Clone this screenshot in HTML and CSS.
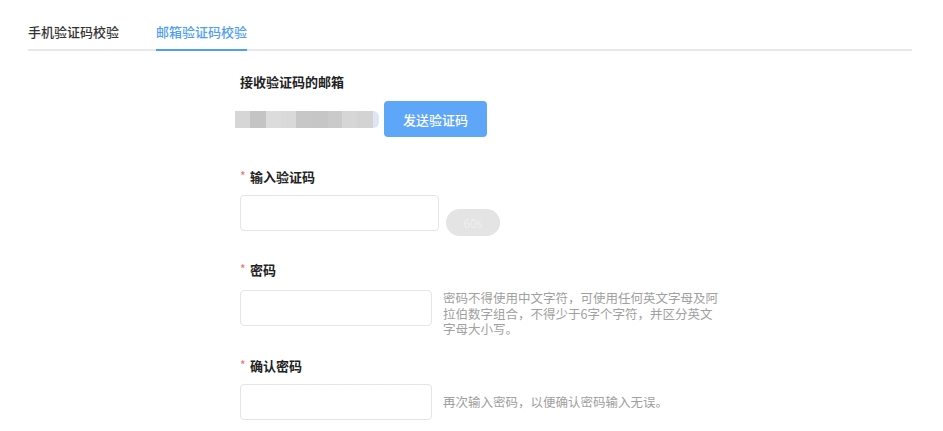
FILE: index.html
```html
<!DOCTYPE html>
<html lang="zh-CN">
<head>
<meta charset="utf-8">
<title>邮箱验证码校验</title>
<link rel="stylesheet" href="styles.css">
</head>
<body>
<div class="tabs">
  <div class="tab">手机验证码校验</div>
  <div class="tab active">邮箱验证码校验</div>
</div>
<div class="form">
  <div class="label">接收验证码的邮箱</div>
  <div class="row row-email">
    <div class="email-blur">
      <span class="b b1"></span><span class="b b2"></span><span class="b b3"></span><span class="b b4"></span><span class="b b5"></span><span class="b b6"></span><span class="b b7"></span><span class="b b8"></span><span class="b b9"></span><span class="b b10"></span>
    </div>
    <button class="btn-send">发送验证码</button>
  </div>

  <div class="label label-req gap-1"><span class="star">*</span>输入验证码</div>
  <div class="row row-code">
    <div class="input input-code"></div>
    <div class="pill">60s</div>
  </div>

  <div class="label label-req gap-2"><span class="star">*</span>密码</div>
  <div class="row row-pass">
    <div class="input"></div>
    <div class="hint hint-multi">密码不得使用中文字符，可使用任何英文字母及阿拉伯数字组合，不得少于6字个字符，并区分英文字母大小写。</div>
  </div>

  <div class="label label-req gap-3"><span class="star">*</span>确认密码</div>
  <div class="row row-confirm">
    <div class="input"></div>
    <div class="hint">再次输入密码，以便确认密码输入无误。</div>
  </div>
</div>
</body>
</html>
```
FILE: styles.css
```css
* { box-sizing: border-box; }
html, body {
  margin: 0;
  padding: 0;
  background: #ffffff;
  font-family: "Noto Sans CJK SC", "Noto Sans", sans-serif;
}
.tabs {
  display: flex;
  gap: 37px;
  margin-left: 28px;
  width: 884px;
  border-bottom: 2px solid #e6e8ef;
}
.tab {
  font-size: 13px;
  line-height: 20px;
  font-weight: 500;
  padding-top: 22px;
  padding-bottom: 7px;
  color: #333333;
  margin-bottom: -2px;
  border-bottom: 2px solid transparent;
}
.tab.active {
  color: #4f9ef6;
  border-bottom-color: #4f9ef6;
}
.form {
  margin-left: 240px;
  padding-top: 21px;
}
.label {
  font-size: 13px;
  line-height: 20px;
  font-weight: 700;
  color: #222222;
  display: flex;
  align-items: center;
}
.star {
  color: #f26b6b;
  font-size: 12px;
  font-weight: 400;
  width: 10px;
  margin-top: -2px;
}
.row { display: flex; }
.row-email {
  margin-top: 9px;
  margin-left: -5px;
  align-items: center;
  gap: 5px;
}
.email-blur {
  display: flex;
  height: 17px;
  filter: blur(0.6px);
}
.b { display: block; height: 17px; width: 15px; }
.b1 { background: #d6d6d6; }
.b2 { background: #c4c4c4; width: 16px; }
.b3 { background: #dcdcdc; }
.b4 { background: #d9d9d9; }
.b5 { background: #c7c7c7; width: 16px; }
.b6 { background: #c6c6c6; width: 16px; }
.b7 { background: #cacaca; width: 14px; }
.b8 { background: #d6d6d6; }
.b9 { background: #d3d3d3; width: 16px; }
.b10 { background: #dce6f4; width: 6px; border-radius: 0 9px 9px 0; }
.btn-send {
  width: 103px;
  height: 36px;
  border: 0;
  border-radius: 4px;
  background: #5ea6f8;
  color: #ffffff;
  font-family: inherit;
  font-size: 13px;
  font-weight: 500;
  padding: 0;
}
.gap-1 { margin-top: 30px; }
.gap-2 { margin-top: 24px; }
.gap-3 { margin-top: 19px; }
.row-code { margin-top: 8px; }
.row-pass { margin-top: 10px; }
.row-confirm { margin-top: 8px; }
.row-code { align-items: flex-start; gap: 7px; }
.input {
  width: 192px;
  height: 36px;
  border: 1px solid #e3e4ec;
  border-radius: 4px;
  background: #ffffff;
}
.input-code { width: 199px; }
.pill {
  margin-top: 14px;
  width: 54px;
  height: 27px;
  border-radius: 14px;
  background: #e4e4e4;
  color: #efefef;
  font-size: 12px;
  line-height: 27px;
  text-align: center;
}
.row-pass { gap: 11px; align-items: flex-start; }
.row-confirm { gap: 11px; align-items: center; }
.hint {
  font-size: 12.5px;
  color: #a0a0a0;
  line-height: 15.5px;
}
.hint-multi {
  width: 277px;
}
```
